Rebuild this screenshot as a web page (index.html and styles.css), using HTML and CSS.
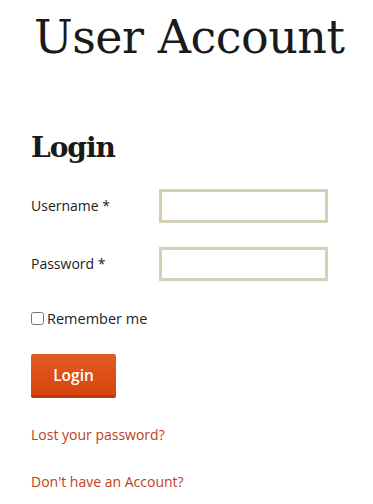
FILE: index.html
```html
<!DOCTYPE html>
<html>
<head>
<meta charset="utf-8">
<link rel="stylesheet" href="styles.css">
</head>
<body>
<main class="page">
  <h1 class="page-title">User Account</h1>
  <h2 class="section-title">Login</h2>
  <form class="login-form">
    <div class="row">
      <label class="label" for="user">Username *</label>
      <input class="field" id="user" type="text">
    </div>
    <div class="row">
      <label class="label" for="pass">Password *</label>
      <input class="field" id="pass" type="password">
    </div>
    <label class="remember"><input type="checkbox" class="check"> Remember me</label>
    <button type="button" class="btn">Login</button>
  </form>
  <p class="link-line"><a class="link" href="#">Lost your password?</a></p>
  <p class="link-line"><a class="link" href="#">Don't have an Account?</a></p>
</main>
</body>
</html>
```
FILE: styles.css
```css
html, body { margin: 0; padding: 0; background: #fff; }
body { font-family: "Open Sans", "Liberation Sans", sans-serif; color: #222; }
.page { padding: 0 0 0 31px; }
.page-title {
  font-family: "DejaVu Serif", "Liberation Serif", serif;
  font-weight: normal;
  font-size: 46px;
  line-height: 1;
  margin: 14px 0 0 3px;
  color: #1a1a1a;
  letter-spacing: -0.5px;
}
.section-title {
  font-family: "DejaVu Serif", "Liberation Serif", serif;
  font-weight: bold;
  font-size: 28px;
  line-height: 1;
  margin: 74px 0 0 0;
  color: #1a1a1a;
  letter-spacing: -1px;
}
.login-form { display: flex; flex-direction: column; margin-top: 27px; }
.row { display: flex; align-items: center; height: 33px; margin-bottom: 25px; }
.label { width: 128px; font-size: 14px; color: #222; }
.field { box-sizing: border-box; width: 169px; height: 34px; border: 3px solid #d4cfb8; margin: 0; padding: 0; background: #fff; }
.remember { display: flex; align-items: center; font-size: 14.5px; color: #222; margin-top: 4px; height: 18px; }
.check { width: 13px; height: 13px; margin: 0 3px 0 0; }
.btn {
  margin-top: 27px;
  width: 85px;
  height: 44px;
  border: 0;
  border-bottom: 3px solid #b8380f;
  border-radius: 2px;
  background: linear-gradient(#e25d22, #d8430f);
  color: #fff;
  font-family: "Open Sans", sans-serif;
  font-size: 15.5px;
  font-weight: 600;
  padding: 0;
}
.link-line { margin: 27px 0 0 0; font-size: 14px; line-height: 20px; }
.link-line + .link-line { margin-top: 27px; }
.link { color: #c1401a; text-decoration: none; }
```
